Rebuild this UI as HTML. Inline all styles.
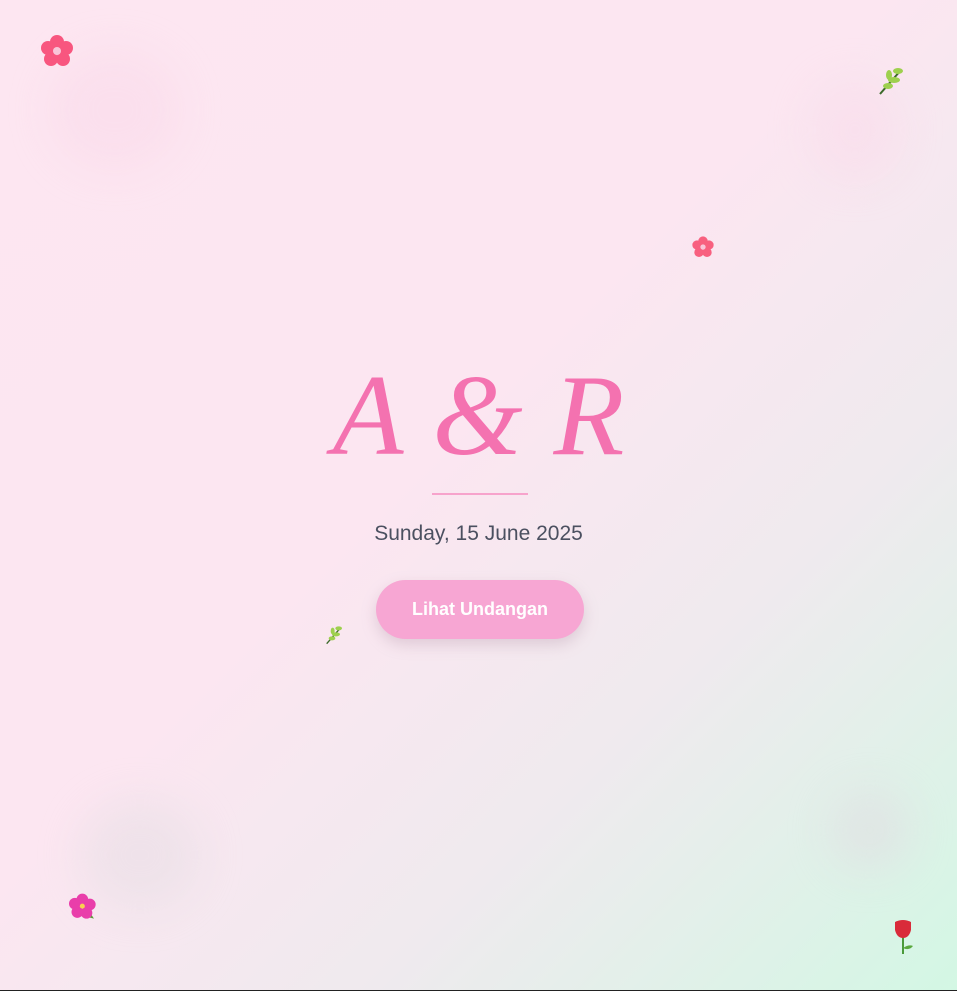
<!DOCTYPE html>
<html><head><meta charset="utf-8"><style>
html,body{margin:0;padding:0;width:957px;height:991px;overflow:hidden}
body{background:linear-gradient(135deg,#fde6f1 0%,#fce6f1 45%,#efeaee 70%,#d3f7e4 100%);position:relative;font-family:"Liberation Sans",sans-serif}
.blob{position:absolute;border-radius:50%;filter:blur(20px)}
.t{position:absolute;left:0;width:957px;text-align:center}
.f{position:absolute}
</style></head><body>
<div class="blob" style="left:50px;top:50px;width:130px;height:120px;background:rgba(250,210,230,.3)"></div>
<div class="blob" style="left:810px;top:80px;width:90px;height:100px;background:rgba(250,215,232,.4)"></div>
<div class="blob" style="left:80px;top:800px;width:120px;height:110px;background:rgba(225,220,225,.4)"></div>
<div class="blob" style="left:830px;top:790px;width:80px;height:80px;background:rgba(225,220,225,.5)"></div>

<svg class="f" style="left:38px;top:33px" width="38" height="36" viewBox="0 0 36 36"><g fill="#f8567f"><circle cx="18" cy="9" r="7"/><circle cx="27" cy="15" r="7"/><circle cx="24" cy="26" r="7"/><circle cx="12" cy="26" r="7"/><circle cx="9" cy="15" r="7"/></g><circle cx="18" cy="18" r="4" fill="#f9c5d8"/></svg>
<svg class="f" style="left:691px;top:235px" width="24" height="24" viewBox="0 0 36 36"><g fill="#f8607f"><circle cx="18" cy="9" r="7"/><circle cx="27" cy="15" r="7"/><circle cx="24" cy="26" r="7"/><circle cx="12" cy="26" r="7"/><circle cx="9" cy="15" r="7"/></g><circle cx="18" cy="18" r="4" fill="#f9c5d8"/></svg>
<svg class="f" style="left:68px;top:892px" width="32" height="30" viewBox="0 0 36 36"><path d="M22 30l8 2-4-6z" fill="#5a9e3a"/><g fill="#e93eaa"><circle cx="16" cy="9" r="7"/><circle cx="25" cy="15" r="7"/><circle cx="21" cy="25" r="7"/><circle cx="10" cy="24" r="7"/><circle cx="7" cy="14" r="7"/></g><circle cx="16" cy="17" r="3" fill="#f9d050"/></svg>
<svg class="f" style="left:891px;top:918px" width="24" height="38" viewBox="0 0 24 38"><path d="M12 18v18" stroke="#4a9a3a" stroke-width="2"/><path d="M12 30q6-4 10-2-4 5-10 2z" fill="#5aa83e"/><path d="M4 4q8-4 16 0v8q-2 8-8 8t-8-8z" fill="#d92b3a"/></svg>
<svg class="f" style="left:877px;top:66px" width="28" height="30" viewBox="0 0 28 30"><path d="M3 28L24 4" stroke="#3c6a2a" stroke-width="2"/><g fill="#9ed04e"><ellipse cx="21" cy="5" rx="5" ry="3"/><ellipse cx="17" cy="14" rx="6" ry="3"/><ellipse cx="12" cy="9" rx="3" ry="5"/><ellipse cx="11" cy="20" rx="5" ry="3"/></g></svg>
<svg class="f" style="left:324px;top:625px" width="20" height="20" viewBox="0 0 28 30"><path d="M3 28L24 4" stroke="#3c6a2a" stroke-width="2"/><g fill="#9ed04e"><ellipse cx="21" cy="5" rx="5" ry="3"/><ellipse cx="17" cy="14" rx="6" ry="3"/><ellipse cx="12" cy="9" rx="3" ry="5"/><ellipse cx="11" cy="20" rx="5" ry="3"/></g></svg>

<div class="t" style="top:346px;font-family:'Liberation Serif',serif;font-style:italic;font-size:116px;color:#f472b0;line-height:140px;letter-spacing:0px;word-spacing:2px">A &amp; R</div>
<div style="position:absolute;left:432px;top:493px;width:96px;height:2px;background:#f7a3cc"></div>
<div class="t" style="top:522px;font-size:21px;color:#4b5060">Sunday, 15 June 2025</div>
<div style="position:absolute;left:376px;top:580px;width:208px;height:59px;border-radius:30px;background:#f7a6d3;box-shadow:0 6px 14px rgba(180,150,170,.35);color:#fff;font-weight:bold;font-size:18px;line-height:59px;text-align:center">Lihat Undangan</div>
<div style="position:absolute;left:0;top:990px;width:957px;height:1px;background:#222"></div>
</body></html>
